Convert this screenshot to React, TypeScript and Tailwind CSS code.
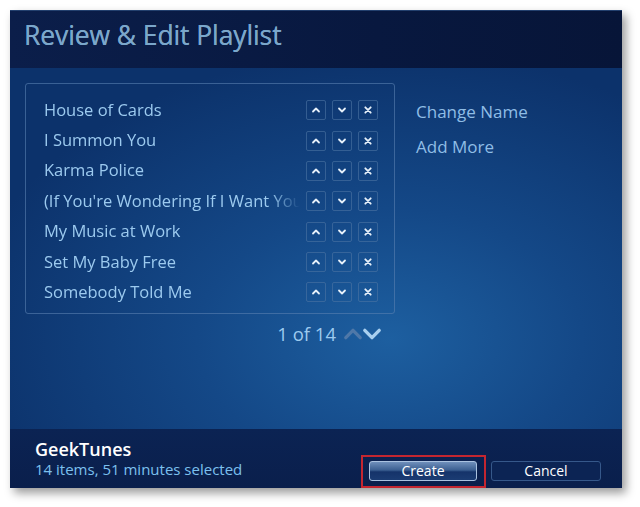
const tracks = [
  "House of Cards",
  "I Summon You",
  "Karma Police",
  "(If You're Wondering If I Want You To) I Want You To",
  "My Music at Work",
  "Set My Baby Free",
  "Somebody Told Me",
];

function Chevron({ dir, className, weight = 1.8 }: { dir: "up" | "down"; className?: string; weight?: number }) {
  return (
    <svg viewBox="0 0 10 10" className={className}>
      <polyline
        points={dir === "up" ? "2,6.5 5,3.5 8,6.5" : "2,3.5 5,6.5 8,3.5"}
        fill="none"
        stroke="currentColor"
        strokeWidth={weight}
        strokeLinecap="round"
        strokeLinejoin="round"
      />
    </svg>
  );
}

function Cross() {
  return (
    <svg viewBox="0 0 10 10" className="w-[10px] h-[10px]">
      <path d="M2.3 2.3 L7.7 7.7 M7.7 2.3 L2.3 7.7" stroke="currentColor" strokeWidth="1.8" strokeLinecap="round" />
    </svg>
  );
}

function RowButton({ children }: { children: React.ReactNode }) {
  return (
    <div className="w-[20px] h-[20px] rounded-[2px] border border-[#4d74a3]/60 flex items-center justify-center text-[#e6f0fa]">
      {children}
    </div>
  );
}

export default function App() {
  return (
    <div className="w-[640px] h-[507px] bg-white pt-[10px] pl-[10px] font-['Open_Sans',sans-serif]">
      <div className="w-[612px] h-[478px] flex flex-col shadow-[4px_5px_9px_rgba(0,0,0,0.4)]">
        {/* header */}
        <div className="h-[58px] shrink-0 bg-[linear-gradient(90deg,#0b1e4a_0%,#08183f_60%,#071538_100%)] border-t border-[#23406e] pl-[14px] pt-[6px]">
          <h1 className="text-[26.5px] leading-[36px] tracking-[-0.1px] text-[#7ba7cb] [text-shadow:0_0_0.4px_#7ba7cb]">
            Review &amp; Edit Playlist
          </h1>
        </div>

        {/* body */}
        <div className="flex-1 bg-[radial-gradient(ellipse_70%_80%_at_62%_75%,#1d5fa0_0%,#144887_45%,#0c326b_100%)] pl-[15px] pt-[15px]">
          <div className="flex">
            <div className="w-[370px] h-[231px] rounded-[3px] border border-[#5a80b0]/60 pt-[11px] pl-[18px] pr-[16px]">
              {tracks.map((t) => (
                <div key={t} className="h-[30.35px] flex items-center">
                  <div className="flex-1 min-w-0 overflow-hidden whitespace-nowrap text-[16.5px] font-[500] text-[#9ccaef] [mask-image:linear-gradient(90deg,#000_88%,transparent_100%)]">
                    {t}
                  </div>
                  <div className="flex gap-[6px] ml-[6px]">
                    <RowButton>
                      <Chevron dir="up" className="w-[10px] h-[10px]" />
                    </RowButton>
                    <RowButton>
                      <Chevron dir="down" className="w-[10px] h-[10px]" />
                    </RowButton>
                    <RowButton>
                      <Cross />
                    </RowButton>
                  </div>
                </div>
              ))}
            </div>
            <div className="pl-[21px] pt-[18px] flex flex-col gap-[13px] text-[17px] font-[500] text-[#8fbde6] leading-[22px]">
              <div>Change Name</div>
              <div>Add More</div>
            </div>
          </div>
          <div className="w-[370px] flex justify-end items-center pr-[11px] pt-[6px]">
            <span className="text-[18.5px] font-[500] text-[#9ccaef] mr-[5px]">1 of 14</span>
            <Chevron dir="up" weight={1.4} className="w-[24px] h-[24px] text-[#4f78a8]" />
            <Chevron dir="down" weight={1.4} className="w-[24px] h-[24px] -ml-[5px] text-[#a9d0f0]" />
          </div>
        </div>

        {/* footer */}
        <div className="h-[59px] shrink-0 bg-[linear-gradient(180deg,#0b2353_0%,#0a1f4c_100%)] flex">
          <div className="pl-[25px] pt-[9px] flex-1">
            <div className="text-[18px] leading-[22px] font-semibold text-white">GeekTunes</div>
            <div className="text-[15px] leading-[19px] font-[500] text-[#7cc0ee]">14 items, 51 minutes selected</div>
          </div>
          <div className="flex items-start pt-[26px] pr-[21px]">
            <div className="border-2 border-[#c42630] pt-[4px] pb-[5px] pl-[6px] pr-[7px] mr-[5px]">
              <div className="w-[108px] h-[20px] rounded-[3px] border border-[#aac2e0] bg-[linear-gradient(180deg,#6f8fbb_0%,#3b5f91_45%,#15336a_55%,#1b3c73_100%)] flex items-center justify-center text-[14px] leading-[18px] text-white">
                Create
              </div>
            </div>
            <div className="mt-[6px] w-[110px] h-[20px] rounded-[3px] border border-[#36588a] bg-[#0c2454] flex items-center justify-center text-[14px] leading-[18px] text-white">
              Cancel
            </div>
          </div>
        </div>
      </div>
    </div>
  );
}
